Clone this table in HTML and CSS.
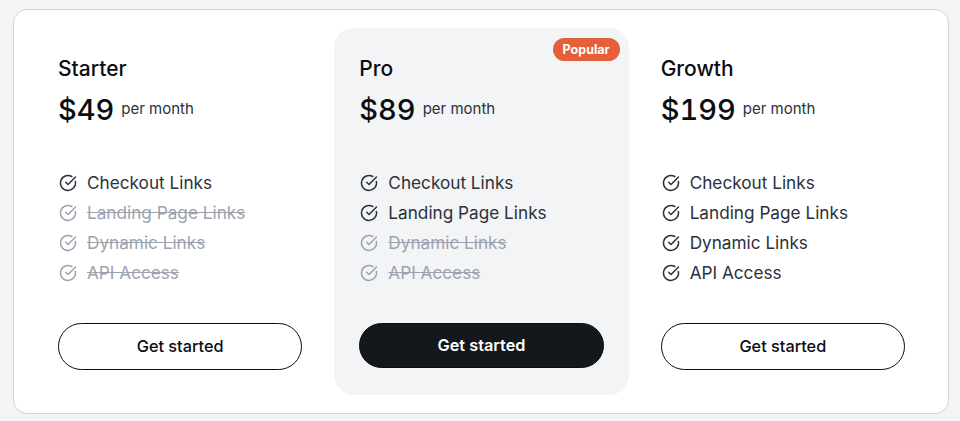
FILE: index.html
```html
<!DOCTYPE html>
<html lang="en">
<head>
<meta charset="utf-8">
<title>Pricing</title>
<link rel="stylesheet" href="styles.css">
</head>
<body>
<div class="card">
  <div class="plan">
    <h2 class="plan-name">Starter</h2>
    <div class="price"><span class="amount">$49</span><span class="period">per month</span></div>
    <ul class="features">
      <li class="feature"><svg class="check" viewBox="0 0 24 24"><path d="M21.801 10A10 10 0 1 1 17 3.335"/><path d="m9 11 3 3L22 4"/></svg><span>Checkout Links</span></li>
      <li class="feature off"><svg class="check" viewBox="0 0 24 24"><path d="M21.801 10A10 10 0 1 1 17 3.335"/><path d="m9 11 3 3L22 4"/></svg><span>Landing Page Links</span></li>
      <li class="feature off"><svg class="check" viewBox="0 0 24 24"><path d="M21.801 10A10 10 0 1 1 17 3.335"/><path d="m9 11 3 3L22 4"/></svg><span>Dynamic Links</span></li>
      <li class="feature off"><svg class="check" viewBox="0 0 24 24"><path d="M21.801 10A10 10 0 1 1 17 3.335"/><path d="m9 11 3 3L22 4"/></svg><span>API Access</span></li>
    </ul>
    <button class="btn">Get started</button>
  </div>
  <div class="plan featured">
    <span class="badge">Popular</span>
    <h2 class="plan-name">Pro</h2>
    <div class="price"><span class="amount">$89</span><span class="period">per month</span></div>
    <ul class="features">
      <li class="feature"><svg class="check" viewBox="0 0 24 24"><path d="M21.801 10A10 10 0 1 1 17 3.335"/><path d="m9 11 3 3L22 4"/></svg><span>Checkout Links</span></li>
      <li class="feature"><svg class="check" viewBox="0 0 24 24"><path d="M21.801 10A10 10 0 1 1 17 3.335"/><path d="m9 11 3 3L22 4"/></svg><span>Landing Page Links</span></li>
      <li class="feature off"><svg class="check" viewBox="0 0 24 24"><path d="M21.801 10A10 10 0 1 1 17 3.335"/><path d="m9 11 3 3L22 4"/></svg><span>Dynamic Links</span></li>
      <li class="feature off"><svg class="check" viewBox="0 0 24 24"><path d="M21.801 10A10 10 0 1 1 17 3.335"/><path d="m9 11 3 3L22 4"/></svg><span>API Access</span></li>
    </ul>
    <button class="btn btn-dark">Get started</button>
  </div>
  <div class="plan">
    <h2 class="plan-name">Growth</h2>
    <div class="price"><span class="amount">$199</span><span class="period">per month</span></div>
    <ul class="features">
      <li class="feature"><svg class="check" viewBox="0 0 24 24"><path d="M21.801 10A10 10 0 1 1 17 3.335"/><path d="m9 11 3 3L22 4"/></svg><span>Checkout Links</span></li>
      <li class="feature"><svg class="check" viewBox="0 0 24 24"><path d="M21.801 10A10 10 0 1 1 17 3.335"/><path d="m9 11 3 3L22 4"/></svg><span>Landing Page Links</span></li>
      <li class="feature"><svg class="check" viewBox="0 0 24 24"><path d="M21.801 10A10 10 0 1 1 17 3.335"/><path d="m9 11 3 3L22 4"/></svg><span>Dynamic Links</span></li>
      <li class="feature"><svg class="check" viewBox="0 0 24 24"><path d="M21.801 10A10 10 0 1 1 17 3.335"/><path d="m9 11 3 3L22 4"/></svg><span>API Access</span></li>
    </ul>
    <button class="btn">Get started</button>
  </div>
</div>
</body>
</html>
```
FILE: styles.css
```css
* { box-sizing: border-box; }
html, body { margin: 0; padding: 0; }
body {
  background: #f3f4f6;
  font-family: Inter, "Noto Sans", sans-serif;
  color: #111827;
  padding: 9px 11px 8px 13px;
}
.card {
  background: #ffffff;
  border: 1px solid #cfd2d6;
  border-radius: 14px;
  padding: 18px 18px 18px 19px;
  display: grid;
  grid-template-columns: repeat(3, minmax(0, 1fr));
  gap: 7px;
}
.plan {
  position: relative;
  padding: 27px 25px 25px 25px;
  border-radius: 20px;
  display: flex;
  flex-direction: column;
}
.featured { background: #f3f4f6; }
.badge {
  position: absolute;
  top: 10px;
  right: 9px;
  background: #e4603a;
  color: #fff;
  font-size: 12.5px;
  font-weight: 700;
  line-height: 23px;
  height: 23px;
  padding: 0 10px;
  border-radius: 12px;
}
.plan-name {
  margin: 0;
  font-size: 21px;
  font-weight: 500;
  line-height: 28px;
  color: #0b0d12;
}
.price {
  display: flex;
  align-items: center;
  gap: 7px;
  margin-top: 9px;
}
.amount {
  font-size: 29px;
  font-weight: 500;
  line-height: 36px;
  color: #0b0d12;
  font-variant-numeric: tabular-nums;
}
.period {
  font-size: 15px;
  color: #2b313b;
  padding-bottom: 3px;
}
.features {
  list-style: none;
  margin: 43px 0 0;
  padding: 0;
  display: flex;
  flex-direction: column;
  gap: 6px;
}
.feature {
  display: flex;
  align-items: center;
  gap: 10px;
  font-size: 17.2px;
  line-height: 24px;
  color: #2b313b;
}
.check {
  width: 18px;
  height: 18px;
  fill: none;
  stroke: currentColor;
  stroke-width: 2;
  stroke-linecap: round;
  stroke-linejoin: round;
  margin-left: 1px;
}
.off { color: #9ca3af; }
.off span { text-decoration: line-through; }
.btn {
  margin-top: 38px;
  width: 100%;
  height: 47px;
  border: 1px solid #0b0d12;
  border-radius: 24px;
  background: #fff;
  color: #0b0d12;
  font-family: inherit;
  font-size: 16.3px;
  font-weight: 500;
  padding-bottom: 3px;
}
.btn-dark {
  background: #14171b;
  color: #fff;
  height: 45px;
  font-weight: 600;
}
```
